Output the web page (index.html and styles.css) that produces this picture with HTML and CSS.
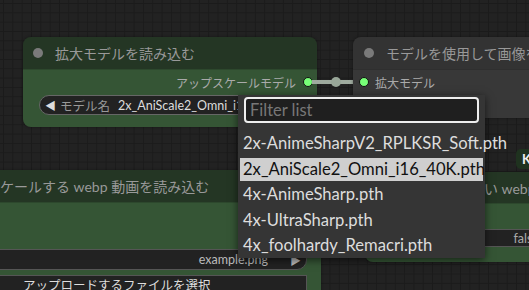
FILE: index.html
```html
<!DOCTYPE html>
<html lang="ja">
<head>
    <meta charset="UTF-8">
    <title>ComfyUI - model list</title>
    <link rel="stylesheet" href="styles.css">
</head>
<body>
    <div class="canvas">
        <!-- load upscale model -->
        <div class="node green node-load">
            <div class="node-title"><span class="dot"></span>拡大モデルを読み込む</div>
            <div class="node-body">
                <div class="slot-out">アップスケールモデル<span class="socket"></span></div>
                <div class="combo">
                    <span class="arrow">◀</span>
                    <span class="combo-label">モデル名</span>
                    <span class="combo-value">2x_AniScale2_Omni_i16_40K.pth</span>
                </div>
            </div>
        </div>

        <div class="link"><span class="link-dot"></span></div>

        <!-- upscale image using model -->
        <div class="node grey node-upscale">
            <div class="node-title"><span class="dot"></span>モデルを使用して画像を拡大</div>
            <div class="node-body">
                <div class="slot-in"><span class="socket"></span>拡大モデル</div>
            </div>
        </div>

        <div class="badge">K</div>

        <!-- load webp video -->
        <div class="node green node-video">
            <div class="node-title"><span class="dot"></span>スケールする webp 動画を読み込む</div>
            <div class="node-body">
                <div class="combo combo-file">
                    <span class="combo-value">example.png</span>
                    <span class="arrow">▶</span>
                </div>
                <div class="upload-btn">アップロードするファイルを選択</div>
            </div>
        </div>

        <!-- save webp -->
        <div class="node green node-save">
            <div class="node-title"><span class="dot"></span>保存用の新しい webp 動画</div>
            <div class="node-body">
                <div class="toggle"><span class="toggle-value">false</span></div>
            </div>
        </div>

        <!-- combo dropdown -->
        <div class="menu">
            <input class="filter" type="text" placeholder="Filter list">
            <div class="menu-item">2x-AnimeSharpV2_RPLKSR_Soft.pth</div>
            <div class="menu-item selected">2x_AniScale2_Omni_i16_40K.pth</div>
            <div class="menu-item">4x-AnimeSharp.pth</div>
            <div class="menu-item">4x-UltraSharp.pth</div>
            <div class="menu-item">4x_foolhardy_Remacri.pth</div>
        </div>
    </div>
</body>
</html>
```

FILE: styles.css
```css
html, body {
    margin: 0;
    overflow: hidden;
}
body {
    font-family: Lato, 'Noto Sans CJK JP', sans-serif;
    background-color: #222;
}
.canvas {
    position: relative;
    width: 529px;
    height: 290px;
    overflow: hidden;
    background-color: #222;
    background-image:
        linear-gradient(#1b1b1b 1px, transparent 1px),
        linear-gradient(90deg, #1b1b1b 1px, transparent 1px);
    background-size: 9.33px 9.33px;
    background-position: 3px 3px;
}

/* nodes */
.node {
    position: absolute;
    border-radius: 8px;
    overflow: hidden;
    box-shadow: 0 0 3px rgba(0, 0, 0, 0.4);
}
.node-title {
    height: 32px;
    display: flex;
    align-items: center;
    padding-left: 10px;
    font-size: 14px;
    color: #999;
    white-space: nowrap;
}
.dot {
    width: 10px;
    height: 10px;
    border-radius: 50%;
    background-color: #7a7a7a;
    margin-right: 12px;
    flex-shrink: 0;
}
.node.green .node-title {
    background-color: #243624;
}
.node.green .node-body {
    background-color: #355535;
}
.node.grey .node-title {
    background-color: #333;
}
.node.grey .node-body {
    background-color: #383838;
}
.node-body {
    box-sizing: border-box;
    height: calc(100% - 32px);
    border-top: 1px solid rgba(0, 0, 0, 0.15);
}
.socket {
    width: 8px;
    height: 8px;
    border-radius: 50%;
    background-color: #7f7;
    border: 1px solid #111;
    flex-shrink: 0;
}

.node-load {
    left: 23px;
    top: 37px;
    width: 294px;
    height: 90px;
}
.slot-out {
    display: flex;
    justify-content: flex-end;
    align-items: center;
    height: 20px;
    margin-top: 2px;
    padding-right: 4px;
    font-size: 12px;
    color: #aaa;
}
.slot-out .socket {
    margin-left: 7px;
}
.combo {
    display: flex;
    align-items: center;
    box-sizing: border-box;
    height: 20px;
    margin: 3px 15px 0 16px;
    background-color: #222;
    border: 1px solid #666;
    border-radius: 10px;
    font-size: 12.5px;
    color: #ddd;
    white-space: nowrap;
    overflow: hidden;
}
.combo .arrow {
    font-size: 11px;
    margin: 0 4px 0 5px;
}
.combo-label {
    color: #999;
    margin-right: 8px;
}

.link {
    position: absolute;
    left: 312px;
    top: 80px;
    width: 48px;
    height: 4px;
    background-color: #9eaa9e;
}
.link-dot {
    position: absolute;
    left: 19px;
    top: -3px;
    width: 10px;
    height: 10px;
    border-radius: 50%;
    background-color: #98a698;
}

.node-upscale {
    left: 353px;
    top: 37px;
    width: 220px;
    height: 81px;
}
.node-upscale .node-title {
    padding-left: 11px;
}
.slot-in {
    display: flex;
    align-items: center;
    height: 20px;
    margin-top: 2px;
    padding-left: 6px;
    font-size: 12px;
    color: #aaa;
}
.slot-in .socket {
    margin-right: 6px;
}

.badge {
    position: absolute;
    left: 516px;
    top: 149px;
    width: 30px;
    height: 20px;
    box-sizing: border-box;
    padding-left: 6px;
    border-radius: 5px;
    background-color: #1f321f;
    color: #eee;
    font-weight: bold;
    font-size: 13px;
    line-height: 20px;
}

.node-video {
    left: -47px;
    top: 170px;
    width: 368px;
    height: 150px;
}
.node-video .node-title {
    padding-left: 10px;
}
.node-video .dot {
    margin-right: 13px;
}
.combo-file {
    justify-content: flex-end;
    margin: 46px 14px 0 8px;
    height: 21px;
    border-color: #555;
}
.combo-file .arrow {
    color: #bbb;
    margin: 0 5px 0 22px;
}
.combo-file .combo-value {
    color: #bbb;
}
.upload-btn {
    box-sizing: border-box;
    height: 24px;
    margin: 5px 14px 0 8px;
    padding-left: 61px;
    background-color: #222;
    border: 1px solid #555;
    font-size: 12.5px;
    line-height: 20px;
    color: #ddd;
    white-space: nowrap;
}

.node-save {
    left: 365px;
    top: 172px;
    width: 200px;
    height: 90px;
}
.node-save .node-title {
    height: 31px;
    padding-left: 11px;
}
.node-save .dot {
    margin-right: 14px;
}
.node-save .node-body {
    height: 59px;
}
.toggle {
    display: flex;
    justify-content: flex-end;
    align-items: center;
    box-sizing: border-box;
    height: 18px;
    margin: 25px 15px 0 15px;
    padding: 0 10px;
    background-color: #222;
    border: 1px solid #555;
    border-radius: 9px;
    font-size: 12.5px;
    color: #aaa;
}

/* dropdown */
.menu {
    position: absolute;
    left: 238px;
    top: 95px;
    width: 247px;
    height: 163px;
    box-sizing: border-box;
    padding: 2px;
    background-color: #353535;
    box-shadow: 0 2px 8px rgba(0, 0, 0, 0.6);
}
.filter {
    display: block;
    box-sizing: border-box;
    width: 235px;
    height: 26px;
    margin: 0 0 9px 4px;
    padding: 0 4px;
    background-color: #1f1f1f;
    border: 2px solid #eee;
    border-radius: 4px;
    font-family: Lato, sans-serif;
    font-size: 16.5px;
    color: #ddd;
    outline: none;
}
.filter::placeholder {
    color: #777;
}
.menu-item {
    height: 23px;
    line-height: 23px;
    margin-bottom: 2.6px;
    padding-left: 3px;
    font-size: 16.6px;
    color: #ddd;
    white-space: nowrap;
}
.menu-item.selected {
    background-color: #cfcfcf;
    color: #111;
}
```
